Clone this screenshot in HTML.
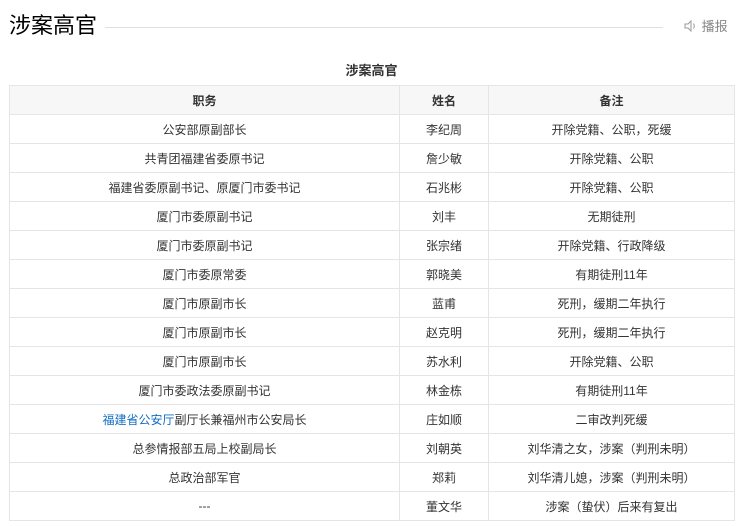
<!DOCTYPE html>
<html><head><meta charset="utf-8"><style>
body{margin:0;background:#fff;font-family:"Liberation Sans","Noto Sans CJK SC",sans-serif;color:#333;width:743px;height:526px;overflow:hidden;position:relative}
.t{position:absolute;left:9px;top:11px;font-size:22px;line-height:30px;color:#000}
.ln{position:absolute;left:105px;top:27px;width:558px;height:1px;background:#e0e0e0}
.bb{position:absolute;left:684px;top:18px;font-size:13px;color:#888;line-height:18px}
.cap{position:absolute;left:0;width:743px;top:60px;text-align:center;font-weight:bold;font-size:13px;color:#333}
table{position:absolute;left:9px;top:85px;border-collapse:collapse;width:726px;font-size:12px}
td,th{border:1px solid #e5e5e5;height:28px;text-align:center;padding:0}
th{background:#f7f7f7;font-weight:bold;color:#333}
a{color:#136ec2;text-decoration:none}
</style></head><body>
<div class="t">涉案高官</div>
<div class="ln"></div>
<div class="bb"><svg width="14" height="12" viewBox="0 0 14 12" style="vertical-align:-1px"><path d="M1 4h3l3-3v10l-3-3H1z" fill="none" stroke="#999"/><path d="M9.5 3.5q1.5 2.5 0 5" fill="none" stroke="#999"/></svg> 播报</div>
<div class="cap">涉案高官</div>
<table>
<colgroup><col style="width:390px"><col style="width:89px"><col></colgroup>
<tr><th>职务</th><th>姓名</th><th>备注</th></tr>
<tr><td>公安部原副部长</td><td>李纪周</td><td>开除党籍、公职，死缓</td></tr>
<tr><td>共青团福建省委原书记</td><td>詹少敏</td><td>开除党籍、公职</td></tr>
<tr><td>福建省委原副书记、原厦门市委书记</td><td>石兆彬</td><td>开除党籍、公职</td></tr>
<tr><td>厦门市委原副书记</td><td>刘丰</td><td>无期徒刑</td></tr>
<tr><td>厦门市委原副书记</td><td>张宗绪</td><td>开除党籍、行政降级</td></tr>
<tr><td>厦门市委原常委</td><td>郭晓美</td><td>有期徒刑11年</td></tr>
<tr><td>厦门市原副市长</td><td>蓝甫</td><td>死刑，缓期二年执行</td></tr>
<tr><td>厦门市原副市长</td><td>赵克明</td><td>死刑，缓期二年执行</td></tr>
<tr><td>厦门市原副市长</td><td>苏水利</td><td>开除党籍、公职</td></tr>
<tr><td>厦门市委政法委原副书记</td><td>林金栋</td><td>有期徒刑11年</td></tr>
<tr><td><a>福建省公安厅</a>副厅长兼福州市公安局长</td><td>庄如顺</td><td>二审改判死缓</td></tr>
<tr><td>总参情报部五局上校副局长</td><td>刘朝英</td><td>刘华清之女，涉案（判刑未明）</td></tr>
<tr><td>总政治部军官</td><td>郑莉</td><td>刘华清儿媳，涉案（判刑未明）</td></tr>
<tr><td>---</td><td>董文华</td><td>涉案（蛰伏）后来有复出</td></tr>
</table>
</body></html>
